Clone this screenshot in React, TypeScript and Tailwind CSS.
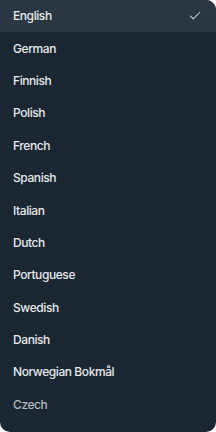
import { Check } from "lucide-react";

const languages = [
  "English",
  "German",
  "Finnish",
  "Polish",
  "French",
  "Spanish",
  "Italian",
  "Dutch",
  "Portuguese",
  "Swedish",
  "Danish",
  "Norwegian Bokmål",
  "Czech",
];

export default function App() {
  return (
    <div className="h-[432px] w-[216px] bg-white">
      <div
        className="h-[432px] overflow-hidden rounded-tr-[10px] rounded-b-[10px] bg-[#1a2632]"
        style={{ fontFamily: "Inter, 'Liberation Sans', sans-serif" }}
      >
        {languages.map((lang, i) => (
          <div
            key={lang}
            className={
              "flex h-[32.4px] items-center justify-between pl-[13px] pr-[14px] text-[12px] font-medium tracking-[-0.035em] " +
              (i === 0 ? "bg-[#2a3641] " : "") +
              (i === languages.length - 1 ? "text-[#b4bac1]" : "text-[#e8eaed]")
            }
          >
            <span>{lang}</span>
            {i === 0 ? <Check size={14} strokeWidth={1.75} className="text-[#d5d9de]" /> : null}
          </div>
        ))}
      </div>
    </div>
  );
}
